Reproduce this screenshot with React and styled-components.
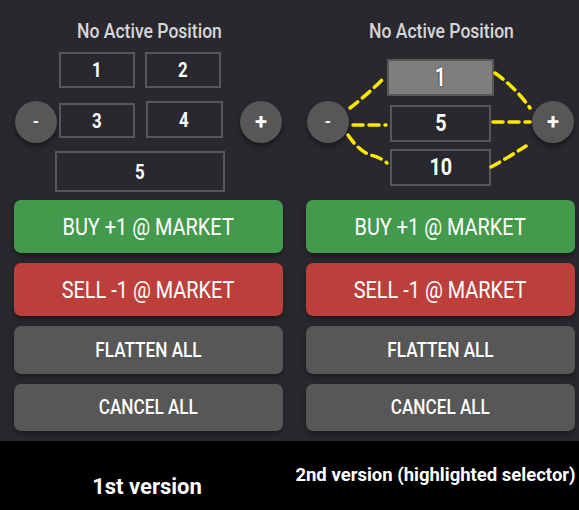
import React from 'react'
import styled, { createGlobalStyle } from 'styled-components'

const Global = createGlobalStyle`
  html, body {
    margin: 0;
    padding: 0;
    background: #000;
  }
  body {
    font-family: Roboto, "Liberation Sans", sans-serif;
  }
`

const Page = styled.div`
  width: 579px;
  height: 510px;
  background: #000;
  display: flex;
  flex-direction: column;
`

const Panels = styled.div`
  height: 441px;
  background: #29282e;
  display: grid;
  grid-template-columns: 290px 289px;
`

const Panel = styled.section`
  padding: 20px ${p => p.$right}px 0 ${p => p.$left}px;
  display: flex;
  flex-direction: column;
`

const Squeeze = styled.span`
  display: inline-block;
  white-space: nowrap;
  transform: scaleX(${p => p.$sx || 0.88});
`

const Title = styled.h2`
  margin: 0;
  height: 24px;
  font-size: 19.5px;
  line-height: 24px;
  font-weight: 500;
  color: #d6d6d8;
  text-align: center;
  margin-left: 2px;
`

const Selector = styled.div`
  position: relative;
  height: 144px;
  margin-top: 6px;
  padding: 0 1px;
  display: flex;
  align-items: center;
  justify-content: space-between;
`

const Round = styled.button`
  width: 42px;
  height: 42px;
  flex: none;
  border: none;
  border-radius: 50%;
  background: #575757;
  color: #fff;
  font-family: Roboto, sans-serif;
  font-size: ${p => (p.$plus ? 22 : 16)}px;
  font-weight: 700;
  line-height: 42px;
  padding: 0;
  box-shadow: 0 3px 5px rgba(0, 0, 0, 0.45);
`

const BoxGrid = styled.div`
  width: 170px;
  margin: 0 15px 0 -2px;
  display: grid;
  grid-template-columns: 1fr 1fr;
  grid-template-rows: 36px 37px 41px;
  column-gap: 11px;
  row-gap: 13px;
`

const Box = styled.div`
  box-sizing: border-box;
  border: 2.5px solid #575757;
  background: ${p => (p.$active ? '#7e7e7e' : 'transparent')};
  color: #fff;
  display: flex;
  align-items: center;
  justify-content: center;
  font-size: ${p => p.$size || 20.5}px;
  font-weight: 700;
  text-shadow: ${p => (p.$active ? '0 0 1.5px #000, 0 0 1px #000' : 'none')};
  grid-column: ${p => (p.$wide ? '1 / span 2' : 'auto')};
  margin: ${p => p.$margin || '0'};
`

const Stack = styled.div`
  display: flex;
  flex-direction: column;
  align-items: center;
  gap: 9px;
`

const StackBox = styled(Box)`
  width: ${p => (p.$active ? 107 : 101)}px;
  height: 37px;
  margin-top: ${p => p.$pull || 0}px;
`

const Lines = styled.svg`
  position: absolute;
  left: 0;
  top: 0;
  pointer-events: none;
`

const Actions = styled.div`
  margin-top: 6px;
  display: flex;
  flex-direction: column;
  gap: 10px;
`

const tones = {
  buy: '#439a4c',
  sell: '#bc3f3c',
  plain: '#575757',
}

const Action = styled.button`
  height: ${p => p.$h}px;
  border: none;
  border-radius: 7px;
  background: ${p => tones[p.$tone]};
  color: #fff;
  font-family: Roboto, sans-serif;
  font-size: ${p => (p.$tone === 'plain' ? 19.5 : 24)}px;
  font-weight: ${p => (p.$tone === 'plain' ? 500 : 400)};
  padding: 0;
  box-shadow: 0 3px 5px rgba(0, 0, 0, 0.35);
`

const Captions = styled.div`
  flex: 1;
  display: grid;
  grid-template-columns: 290px 289px;
  color: #fff;
`

const Caption = styled.div`
  text-align: center;
  font-weight: 700;
  font-size: ${p => p.$size}px;
  line-height: 1;
  padding-top: ${p => p.$top}px;
  margin-left: ${p => p.$shift || 0}px;
`

function ButtonStack() {
  return (
    <Actions>
      <Action $tone="buy" $h={53}><Squeeze $sx={0.83}>BUY +1 @ MARKET</Squeeze></Action>
      <Action $tone="sell" $h={53}><Squeeze $sx={0.83}>SELL -1 @ MARKET</Squeeze></Action>
      <Action $tone="plain" $h={48}><Squeeze $sx={0.88}>FLATTEN ALL</Squeeze></Action>
      <Action $tone="plain" $h={47}><Squeeze $sx={0.88}>CANCEL ALL</Squeeze></Action>
    </Actions>
  )
}

const dash = { stroke: '#ffe800', strokeWidth: 3.5, strokeDasharray: '10 6', fill: 'none', strokeLinecap: 'round' }

export default function App() {
  return (
    <Page>
      <Global />
      <Panels>
        <Panel $left={14} $right={7}>
          <Title><Squeeze $sx={0.9}>No Active Position</Squeeze></Title>
          <Selector>
            <Round>-</Round>
            <BoxGrid>
              <Box $margin="0 0 0 4px"><Squeeze $sx={0.82}>1</Squeeze></Box>
              <Box $margin="0 4px 0 -1px"><Squeeze $sx={0.82}>2</Squeeze></Box>
              <Box $margin="2px 0 0 4px"><Squeeze $sx={0.82}>3</Squeeze></Box>
              <Box $margin="0 2px 0 0"><Squeeze $sx={0.82}>4</Squeeze></Box>
              <Box $wide><Squeeze $sx={0.82}>5</Squeeze></Box>
            </BoxGrid>
            <Round $plus>+</Round>
          </Selector>
          <ButtonStack />
        </Panel>
        <Panel $left={16} $right={4}>
          <Title><Squeeze $sx={0.9}>No Active Position</Squeeze></Title>
          <Selector>
            <Lines width="269" height="144">
              <path d="M44 58 Q62 44 79 27" style={dash} />
              <path d="M47 75 L80 75" style={dash} />
              <path d="M42 85 Q52 100 64 105 Q74 107 81 113" style={dash} />
              <path d="M189 23 Q210 38 224 58" style={dash} />
              <path d="M187 72 L224 72" style={dash} />
              <path d="M185 117 Q198 110 220 96" style={dash} />
            </Lines>
            <Round>-</Round>
            <Stack>
              <StackBox $active $size={25}><Squeeze $sx={0.8}>1</Squeeze></StackBox>
              <StackBox $size={24}><Squeeze $sx={0.82}>5</Squeeze></StackBox>
              <StackBox $size={24} $pull={-2}><Squeeze $sx={0.82}>10</Squeeze></StackBox>
            </Stack>
            <Round $plus>+</Round>
          </Selector>
          <ButtonStack />
        </Panel>
      </Panels>
      <Captions>
        <Caption $size={22} $top={35} $shift={4}>1st version</Caption>
        <Caption $size={18.5} $top={25} $shift={2}>2nd version (highlighted selector)</Caption>
      </Captions>
    </Page>
  )
}
